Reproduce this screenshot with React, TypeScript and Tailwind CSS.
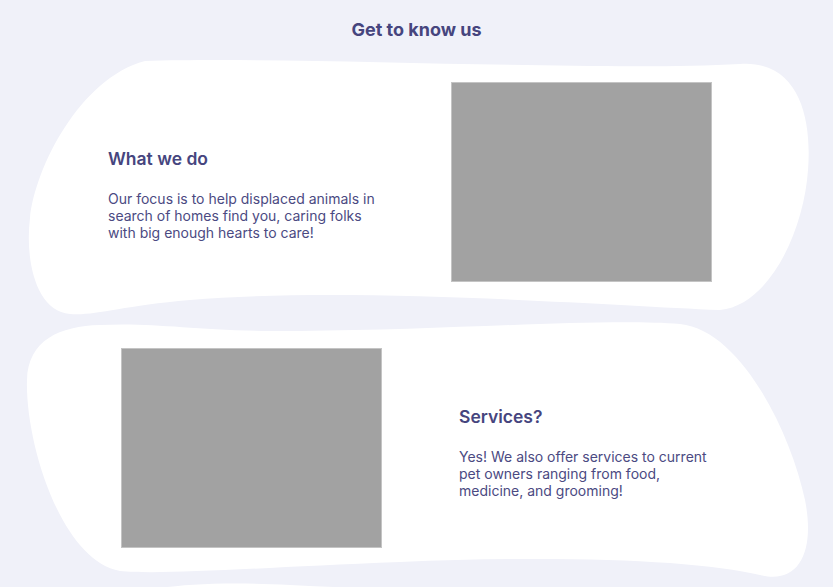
import React from "react";

const ink = "text-[#46457e]";

function Blob({ d, h }: { d: string; h: number }) {
  return (
    <svg
      className="absolute inset-0 w-full h-full overflow-visible"
      viewBox={`0 0 833 ${h}`}
      preserveAspectRatio="none"
      aria-hidden
    >
      <path d={d} fill="#ffffff" />
    </svg>
  );
}

function Photo() {
  return <div className="w-[261px] h-[200px] shrink-0 bg-[#a2a2a2] border border-[#c4c4c4]" />;
}

function Copy({ title, body, width }: { title: string; body: string; width: string }) {
  return (
    <div className={width}>
      <h2 className={`text-[17.5px] leading-6 font-semibold ${ink}`}>{title}</h2>
      <p className="mt-[19px] text-sm leading-[17px] text-[#4b4a82]">{body}</p>
    </div>
  );
}

export default function App() {
  return (
    <main
      className="min-h-screen bg-[#f0f1f9] pt-[19px]"
      style={{ fontFamily: "Inter, 'Noto Sans', sans-serif" }}
    >
      <h1 className={`text-center text-lg leading-[22px] font-bold ${ink}`}>Get to know us</h1>

      {/* What we do */}
      <section className="relative mt-[17px] h-[260px]">
        <Blob
          h={260}
          d="M 145 3 C 300 -2, 600 14, 740 6 C 800 2, 812 62, 808 112 C 804 172, 770 247, 720 252 C 600 247, 350 228, 190 242 C 120 248, 95 258, 70 256 C 35 253, 25 200, 30 160 C 35 110, 80 20, 145 3 Z"
        />
        <div className="relative flex items-start pl-[108px] pt-[24px] gap-[68px]">
          <div className="pt-[65px]">
            <Copy
              width="w-[275px]"
              title="What we do"
              body="Our focus is to help displaced animals in search of homes find you, caring folks with big enough hearts to care!"
            />
          </div>
          <Photo />
        </div>
      </section>

      {/* Services */}
      <section className="relative h-[262px]">
        <Blob
          h={262}
          d="M 100 7 C 160 4, 200 14, 300 13 C 450 12, 600 0, 680 6 C 740 12, 790 112, 805 182 C 815 232, 800 267, 760 257 C 700 242, 560 237, 400 244 C 250 250, 160 257, 120 253 C 60 242, 25 122, 27 62 C 28 22, 60 8, 100 7 Z"
        />
        <div className="relative flex items-start pl-[121px] pt-[30px] gap-[77px]">
          <Photo />
          <div className="pt-[57px]">
            <Copy
              width="w-[260px]"
              title="Services?"
              body="Yes! We also offer services to current pet owners ranging from food, medicine, and grooming!"
            />
          </div>
        </div>
      </section>

      <section className="relative h-[260px]">
        <Blob
          h={260}
          d="M 160 8 C 190 4, 230 2, 290 5 C 420 11, 600 20, 760 34 C 810 60, 815 160, 800 220 C 780 262, 300 262, 60 240 C 30 200, 50 80, 100 40 C 125 20, 140 12, 160 8 Z"
        />
      </section>
    </main>
  );
}
